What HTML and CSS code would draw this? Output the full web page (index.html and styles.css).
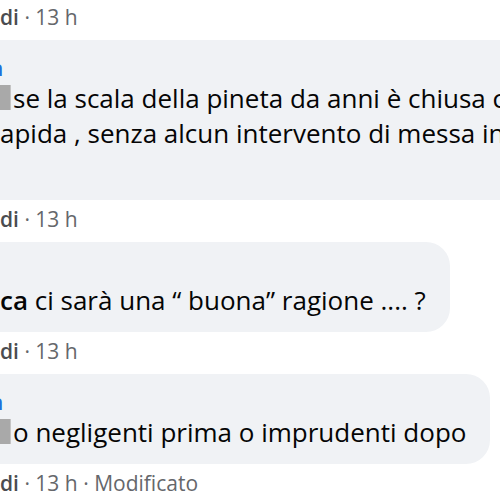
FILE: index.html
```
<!DOCTYPE html>
<html>
<head>
    <title>Commenti</title>
    <link rel="stylesheet" href="styles.css">
</head>
<body>
    <div class="thread">
        <div class="meta"><span class="reply">di</span> · 13 h</div>

        <div class="comment">
            <div class="bubble">
                <div class="author">a</div>
                <div class="text"><span class="hidden-tag"></span>se la scala della pineta da anni è chiusa con transenne e nastri<br>apida , senza alcun intervento di messa in sicurezza da parte<br>&nbsp;</div>
            </div>
            <div class="meta"><span class="reply">di</span> · 13 h</div>
        </div>

        <div class="comment">
            <div class="bubble">
                <div class="author">&nbsp;</div>
                <div class="text"><span class="mention">ca</span> ci sarà una “ buona” ragione .... ?</div>
            </div>
            <div class="meta"><span class="reply">di</span> · 13 h</div>
        </div>

        <div class="comment">
            <div class="bubble">
                <div class="author">a</div>
                <div class="text"><span class="hidden-tag"></span>o negligenti prima o imprudenti dopo</div>
            </div>
            <div class="meta"><span class="reply">di</span> · 13 h · Modificato</div>
        </div>
    </div>
</body>
</html>
```
FILE: styles.css
```
body {
    margin: 0;
    padding: 0;
    background: #ffffff;
    font-family: "Open Sans", "Noto Sans", sans-serif;
    color: #050505;
    overflow: hidden;
    height: 100vh;
}

.thread {
    margin-top: -2px;
}

.meta {
    font-size: 21px;
    line-height: 28px;
    padding: 5px 0 9px;
    color: #65676b;
    white-space: nowrap;
}

.reply {
    font-weight: 600;
    color: #4b4c50;
}

.bubble {
    display: block;
    width: max-content;
    background: #f0f2f5;
    border-radius: 24px;
    margin-left: -30px;
    padding: 13px 24px 14px 30px;
}

.author {
    font-size: 22px;
    line-height: 28px;
    font-weight: 700;
    color: #216fdb;
    text-indent: -10px;
}

.text {
    font-size: 26px;
    line-height: 35px;
    white-space: nowrap;
}

.mention {
    font-weight: 600;
}

.hidden-tag {
    display: inline-block;
    width: 10px;
    height: 25px;
    margin-right: 2px;
    vertical-align: -2px;
    background: #a9a9a9;
    border-right: 1px solid #c4c4c4;
}
```
